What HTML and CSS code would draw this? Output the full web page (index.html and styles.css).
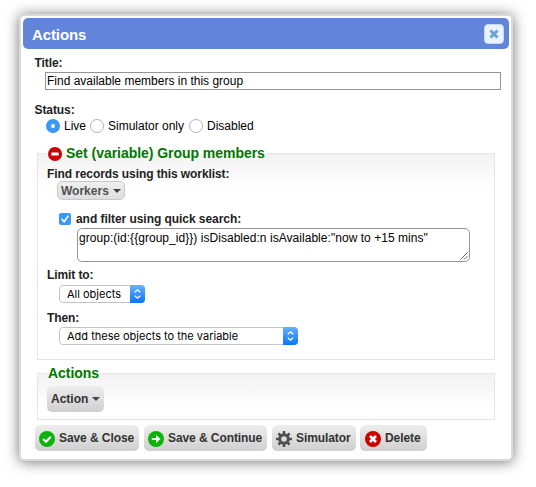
FILE: index.html
```html
<!DOCTYPE html>
<html lang="en">
<head>
<meta charset="utf-8">
<title>Actions</title>
<link rel="stylesheet" href="styles.css">
</head>
<body>
<main class="dialog">
  <header class="titlebar">
    <h1>Actions</h1>
    <button class="close" aria-label="Close"><svg width="10" height="10" viewBox="0 0 10 10"><path d="M1.5 1.5 8.5 8.5M8.5 1.5 1.5 8.5" stroke="#6ba3d2" stroke-width="3"/></svg></button>
  </header>
  <form class="content">
    <div class="label title-label"><span>Title:</span></div>
    <div class="title-input"><span class="t-title">Find available members in this group</span></div>
    <div class="label status-label"><span>Status:</span></div>
    <div class="radios">
      <span class="radio on"></span><span class="t-live">Live</span>
      <span class="radio"></span><span class="t-sim">Simulator only</span>
      <span class="radio"></span><span class="t-dis">Disabled</span>
    </div>

    <fieldset class="variable">
      <legend><svg width="14" height="14" viewBox="0 0 14 14"><circle cx="7" cy="7" r="7" fill="#cb0000"/><rect x="3.3" y="5.5" width="7.4" height="3" rx=".5" fill="#fff"/></svg><span class="t-set">Set (variable) Group members</span></legend>
      <div class="label"><span class="t-find">Find records using this worklist:</span></div>
      <button type="button" class="chip workers"><span>Workers</span><i class="caret"></i></button>
      <div class="filter">
        <span class="check"><svg width="12" height="12" viewBox="0 0 12 12"><path d="M3 6.3 5.1 8.7 9.1 3.1" fill="none" stroke="#fff" stroke-width="1.6" stroke-linecap="round"/></svg></span>
        <span class="t-filter">and filter using quick search:</span>
      </div>
      <div class="query">
        <span class="t-query">group:(id:{{group_id}}) isDisabled:n isAvailable:"now to +15 mins"</span>
        <svg class="grip" width="8" height="8" viewBox="0 0 8 8"><path d="M.5 7.5 7.5.5M4 7.5 7.5 4" stroke="#555" stroke-width=".9"/></svg>
      </div>
      <div class="label limit"><span>Limit to:</span></div>
      <div class="select small"><span class="t-all">All objects</span><b class="stepper"><svg width="15" height="18" viewBox="0 0 15 18"><path d="M4.8 7.3 7.5 4.8 10.2 7.3M4.8 10.7 7.5 13.2 10.2 10.7" fill="none" stroke="#fff" stroke-width="1.3"/></svg></b></div>
      <div class="label then"><span>Then:</span></div>
      <div class="select wide"><span class="t-add">Add these objects to the variable</span><b class="stepper"><svg width="15" height="18" viewBox="0 0 15 18"><path d="M4.8 7.3 7.5 4.8 10.2 7.3M4.8 10.7 7.5 13.2 10.2 10.7" fill="none" stroke="#fff" stroke-width="1.3"/></svg></b></div>
    </fieldset>

    <fieldset class="actions">
      <legend><span>Actions</span></legend>
      <button type="button" class="chip action"><span>Action</span><i class="caret"></i></button>
    </fieldset>

    <div class="toolbar">
      <button type="button" class="chip save"><svg width="16" height="16" viewBox="0 0 16 16"><circle cx="8" cy="8" r="8" fill="#0bb30b"/><path d="M4.2 8 7 10.7 11.8 5.7" fill="none" stroke="#fff" stroke-width="2.2"/></svg><span>Save &amp; Close</span></button>
      <button type="button" class="chip continue"><svg width="16" height="16" viewBox="0 0 16 16"><circle cx="8" cy="8" r="8" fill="#0bb30b"/><path d="M3.8 6.9H8V4L12.6 8 8 12V9.1H3.8Z" fill="#fff"/></svg><span>Save &amp; Continue</span></button>
      <button type="button" class="chip simulator"><svg width="16" height="16" viewBox="0 0 16 16"><circle cx="8" cy="8" r="4.3" fill="none" stroke="#505050" stroke-width="3"/><path d="M8 0V3M8 13V16M0 8H3M13 8H16M2.4 2.4 4.5 4.5M11.5 11.5 13.6 13.6M13.6 2.4 11.5 4.5M4.5 11.5 2.4 13.6" stroke="#505050" stroke-width="2.6"/></svg><span>Simulator</span></button>
      <button type="button" class="chip delete"><svg width="16" height="16" viewBox="0 0 16 16"><circle cx="8" cy="8" r="8" fill="#cb0000"/><path d="M5 5 11 11M11 5 5 11" stroke="#fff" stroke-width="2.7"/></svg><span>Delete</span></button>
    </div>
  </form>
</main>
</body>
</html>
```
FILE: styles.css
```css
* { box-sizing: border-box; }
body { margin: 0; min-height: 487px; padding: 14px 0 0 19px; background: #fff; color: #000; font: 12px/14px "Liberation Sans", Arial, sans-serif; white-space: nowrap; }
svg { display: block; flex: none; }
button { font: inherit; margin: 0; padding: 0; border: 0; }
.dialog { width: 494px; height: 447px; padding: 2px; border: 2px solid #dadada; border-radius: 5px; background: #fff; box-shadow: 0 1px 14px rgba(0, 0, 0, .55); }
.titlebar { height: 31px; padding: 0 5px 0 9px; display: flex; align-items: center; justify-content: space-between; border-radius: 5px; background: #6284db; }
.titlebar h1 { margin: 3px 0 0; color: #fff; font-size: 15px; line-height: 18px; letter-spacing: -.1px; }
.close { width: 20px; height: 20px; margin-top: 1px; display: grid; place-items: center; border: 1px solid #c5dbec; border-radius: 4px; background: #e8f3ff; }
.content { padding: 7px 14px 0; margin: 0; }
.label { height: 14px; font-weight: bold; color: #222; letter-spacing: -.09px; }
.title-label { margin: 0 0 2px -2.5px; }
.title-input { width: 456px; height: 18px; margin-left: 8px; padding: 1px 1px; border: 1px solid #949494; }
.status-label { margin: 13px 0 2px -2.5px; }
.radios { height: 14px; margin-left: 9px; display: flex; align-items: center; }
.radio { width: 14px; height: 14px; margin-right: 4px; border: 1px solid #b5b5b5; border-radius: 50%; background: #fff; }
.radio.on { border: 5px solid #3a98fc; }
.t-live { width: 26px; }
.t-sim { width: 81px; }
fieldset { margin: 0; padding: 0 0 0 9px; min-width: 0; width: 458px; border: 1px solid #e4e4e4; background: linear-gradient(#f2f2f2, #fff 34px); }
legend { height: 17px; margin: 0; padding: 0 1px; display: flex; align-items: center; gap: 4px; font-size: 14px; font-weight: bold; line-height: 17px; color: #007800; letter-spacing: -.04px; }
.variable { height: 215px; margin-top: 12px; }
.variable .label { margin-top: 5px; }
.chip { display: flex; align-items: center; border-radius: 5px; background: linear-gradient(#ededed, #cfcfcf); color: #333; font-weight: bold; height: 26px; padding: 0 4px; }
.caret { border: 4px solid transparent; border-top-color: #444; border-bottom: 0; margin-left: 4px; }
.workers { width: 68px; height: 19px; margin: 0 0 0 10px; color: #505050; border: 1px solid #c9c9c9; padding-left: 3px; background: linear-gradient(#efefef, #dedede); }
.filter { height: 14px; margin: 12px 0 2px 12px; display: flex; align-items: center; font-weight: bold; color: #222; letter-spacing: -.05px; }
.check { width: 12px; height: 12px; margin-right: 5px; border-radius: 2px; background: #3a98fc; }
.query { width: 393px; height: 34px; margin-left: 30px; padding: 2px 1px 1px; display: flex; justify-content: space-between; border: 1px solid #949494; border-radius: 5px; background: #fff; letter-spacing: .04px; }
.grip { align-self: flex-end; }
.select { height: 18px; margin-left: 12px; padding-left: 7px; display: flex; align-items: center; justify-content: space-between; border: 1px solid #c4c4c4; border-radius: 4px; background: #fff; font-family: Inter, "Liberation Sans", sans-serif; font-size: 11px; }
.small { width: 86px; }
.wide { width: 239px; }
.stepper { width: 15px; height: 18px; margin: -1px; border-radius: 0 4px 4px 0; background: linear-gradient(#6bb1fb, #0875f8); }
.variable .limit { margin: 6px 0 3px; }
.variable .then { margin: 8px 0 2px; }
.actions { height: 55px; margin-top: 5px; }
.action { width: 57px; margin-top: 4px; }
.toolbar { display: flex; margin: 5px 0 0 -2px; }
.toolbar .chip { gap: 4px; letter-spacing: -.08px; }
.toolbar svg { margin-top: 2px; }
.save { width: 104px; margin-right: 5px; }
.continue { width: 123px; margin-right: 5px; }
.simulator { width: 84px; margin-right: 4px; }
.toolbar .delete { width: 67px; padding-left: 5px; }
```
